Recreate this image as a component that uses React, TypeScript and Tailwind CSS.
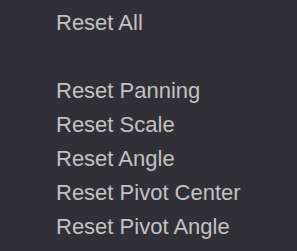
const items = [
  "Reset All",
  null,
  "Reset Panning",
  "Reset Scale",
  "Reset Angle",
  "Reset Pivot Center",
  "Reset Pivot Angle",
];

export default function App() {
  return (
    <div className="w-[297px] h-[251px] bg-[#313036] pt-[6px] font-['Liberation_Sans',Arial,sans-serif]">
      <ul className="flex flex-col">
        {items.map((label, i) =>
          label ? (
            <li key={i} className="h-[34px] leading-[34px] pl-[56px] text-[22px] text-[#c2c2c2] whitespace-nowrap">
              {label}
            </li>
          ) : (
            <li key={i} className="h-[34px]" />
          )
        )}
      </ul>
    </div>
  );
}
